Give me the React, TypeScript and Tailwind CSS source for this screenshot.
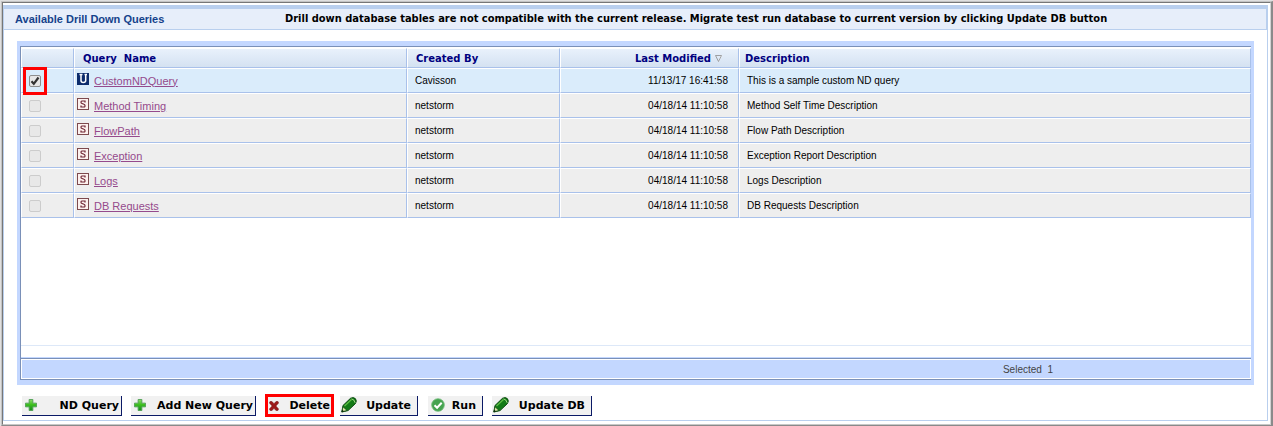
import React, { useState } from 'react'
import clsx from 'clsx'

interface Query {
  name: string
  kind: 'U' | 'S'
  createdBy: string
  modified: string
  description: string
}

const QUERIES: Query[] = [
  { name: 'CustomNDQuery', kind: 'U', createdBy: 'Cavisson', modified: '11/13/17 16:41:58', description: 'This is a sample custom ND query' },
  { name: 'Method Timing', kind: 'S', createdBy: 'netstorm', modified: '04/18/14 11:10:58', description: 'Method Self Time Description' },
  { name: 'FlowPath', kind: 'S', createdBy: 'netstorm', modified: '04/18/14 11:10:58', description: 'Flow Path Description' },
  { name: 'Exception', kind: 'S', createdBy: 'netstorm', modified: '04/18/14 11:10:58', description: 'Exception Report Description' },
  { name: 'Logs', kind: 'S', createdBy: 'netstorm', modified: '04/18/14 11:10:58', description: 'Logs Description' },
  { name: 'DB Requests', kind: 'S', createdBy: 'netstorm', modified: '04/18/14 11:10:58', description: 'DB Requests Description' }
]

const PlusIcon = () => (
  <svg width="12" height="12" viewBox="0 0 13 13" className="shrink-0" aria-hidden="true">
    <defs>
      <linearGradient id="plusFill" x1="0" y1="0" x2="0" y2="1">
        <stop offset="0" stopColor="#8fd86a" />
        <stop offset="0.45" stopColor="#3fc11f" />
        <stop offset="1" stopColor="#168a1c" />
      </linearGradient>
    </defs>
    <path d="M4.5 0.5h4v4h4v4h-4v4h-4v-4h-4v-4h4z" fill="url(#plusFill)" stroke="#4f9f55" strokeWidth="1" />
  </svg>
)

const CrossIcon = () => (
  <svg width="10" height="10" viewBox="0 0 10 10" className="shrink-0" aria-hidden="true">
    <path d="M1 0.5h2L5 2.7 7 0.5h2L9.6 2 6.9 5l2.7 3L8.8 9.6H7L5 7.3 3 9.6H1.2L0.4 8l2.7-3L0.4 2z" fill="#9c1b1b" stroke="#6f1010" strokeWidth="0.5" />
  </svg>
)

const PencilIcon = () => (
  <svg width="16" height="16" viewBox="0 0 16 16" className="shrink-0" aria-hidden="true">
    <path d="M2 8.500L9.500 1.300Q12.500 -0.300 14.500 1.800 16 4 14.500 6.500L7 13.600 0.800 15z" fill="#127a16" stroke="#0b4a10" strokeWidth="1" />
    <path d="M3.500 9L10.500 2.500" stroke="#5fbf45" strokeWidth="1.200" />
    <path d="M10.500 1.800Q13.500 2.500 14.200 5.800" fill="none" stroke="#a9dd8d" strokeWidth="1" />
    <path d="M2 9.800L6 13.400 1 14.800z" fill="#dfe7a8" stroke="#0b4a10" strokeWidth="0.700" />
    <path d="M0.500 15.300l0.800-2.600 1.800 1.900z" fill="#0b2a0c" />
  </svg>
)

const RunIcon = () => (
  <svg width="14" height="14" viewBox="0 0 14 14" className="shrink-0" aria-hidden="true">
    <circle cx="7" cy="7" r="6.300" fill="#45a350" stroke="#6fba77" strokeWidth="0.800" />
    <path d="M3.500 7.200l2.600 2.600 4.600-5" fill="none" stroke="#fff" strokeWidth="2" />
  </svg>
)

const KindIcon = ({ kind }: { kind: Query['kind'] }) => {
  const user = kind === 'U'
  return (
    <svg width="12" height="12" viewBox="0 0 12 12" className="mb-1 shrink-0" role="img" aria-label={user ? 'User query' : 'System query'}>
      <rect x="0.5" y="0.5" width="11" height="11" fill={user ? '#0d2c6c' : '#fdf1ee'} stroke={user ? '#0d2c6c' : '#7d4a4e'} />
      {user ? (
        <path d="M2.500 1.500h3M7.500 1.500h2.500M4 2v5.500q0 2 2.300 2T8.700 7.500V2" fill="none" stroke="#fff" strokeWidth="1.500" />
      ) : (
        <path d="M8 4.500V3H4.800Q4 3 4 4.200T5 5.500L7 6.200Q8 6.500 8 7.800T7.200 9H4V7.500" fill="none" stroke="#6d2230" strokeWidth="1.200" />
      )}
    </svg>
  )
}

const CELL = 'h-[25px] border-t border-l border-t-white border-l-white border-r border-b border-r-[#a9c1ea] border-b-[#a9c1ea] p-0 leading-4'
const HEAD = 'h-5 border-t border-l border-t-white border-l-white border-r border-b border-r-[#a9c1ea] border-b-[#a9c1ea] p-0 pt-px text-left font-bold leading-4'

interface ToolButtonProps {
  label: string
  icon: React.ReactNode
  className: string
}

const ToolButton = ({ label, icon, className }: ToolButtonProps) => (
  <button
    type="button"
    className={clsx(
      'flex items-center justify-between border-[#0b1a66] bg-[#f1f1f1] font-bold leading-4 whitespace-nowrap',
      className
    )}
  >
    {icon}
    <span className="pt-px">{label}</span>
  </button>
)

const App: React.FC = () => {
  const [selected, setSelected] = useState<string[]>(['CustomNDQuery'])

  const toggle = (name: string) => {
    setSelected((prev) => (prev.includes(name) ? prev.filter((n) => n !== name) : [...prev, name]))
  }

  return (
    <main className="border-t border-l border-[#e0e0e0] bg-white font-['DejaVu_Sans',Verdana,sans-serif] text-[11px] text-black">
      <div className="border-t border-r-2 border-b border-l border-t-[#c4c4c4] border-r-[#8a8a8a] border-b-[#8a8a8a] border-l-[#c4c4c4]">
        <div className="border-t border-r border-b border-l border-t-[#777] border-r-[#d4d4d4] border-b-[#c8c8c8] border-l-[#777] pt-[2px] pr-[2px] pb-[3px]">
          <section className="border border-[#b9cfee] pb-[3px]">
            <header className="flex h-6 items-center border-t-[3px] border-r border-b border-[#b9cfee] bg-[#e7eefa] pt-px pl-[11px]">
              <h1 className="w-[270px] shrink-0 font-['Liberation_Sans',Arial,sans-serif] text-[11px] font-bold text-[#15428b]">Available Drill Down Queries</h1>
              <p className="font-['DejaVu_Sans_Condensed','DejaVu_Sans',sans-serif] font-bold whitespace-nowrap">
                Drill down database tables are not compatible with the current release. Migrate test run database to current version by clicking Update DB button
              </p>
            </header>

            <div className="mt-[11px] mr-[13px] ml-[13px] bg-[#c3d7ff] pt-[5px] pr-[3px] pb-[5px] pl-[3px]">
              <div className="border-t border-l border-[#7a90b8]">
                <div className="min-h-[299px] border-b border-[#dde8f8] bg-white">
                  <table className="w-full table-fixed border-separate border-spacing-0 border-t border-white">
                    <colgroup>
                      <col className="w-[53px]" />
                      <col className="w-[333px]" />
                      <col className="w-[153px]" />
                      <col className="w-[179px]" />
                      <col />
                    </colgroup>
                    <thead className="bg-linear-to-b from-[#eaf2fc] to-[#d3e1f1] text-[10px] text-[#00007f]">
                      <tr>
                        <th className={HEAD} aria-label="Select" />
                        <th className={clsx(HEAD, 'pl-2 whitespace-pre')}>{'Query  Name'}</th>
                        <th className={clsx(HEAD, 'pl-2')}>Created By</th>
                        <th className={HEAD}>
                          <div className="flex items-center justify-end gap-1 pr-4">
                            Last Modified
                            <svg width="7" height="7" viewBox="0 0 7 7" aria-hidden="true">
                              <path d="M6.500 0.500L3.500 6.500" stroke="#fff" />
                              <path d="M6.500 0.500h-6l3 6z" fill="none" stroke="#8c8c8c" strokeWidth="0.800" />
                            </svg>
                          </div>
                        </th>
                        <th className={clsx(HEAD, 'pl-[5px]')}>Description</th>
                      </tr>
                    </thead>
                    <tbody className="font-['Liberation_Sans',Arial,sans-serif] text-[10px]">
                      {QUERIES.map((q) => {
                        const checked = selected.includes(q.name)
                        return (
                          <tr key={q.name} className={checked ? 'bg-[#daecfb]' : 'bg-[#eeeeee]'}>
                            <td className={CELL}>
                              <label className={clsx('relative ml-px -my-[3px] flex h-7 w-6 items-center justify-center border-[3px]', checked ? 'border-[#f00]' : 'border-transparent')}>
                                <input
                                  type="checkbox"
                                  aria-label={q.name}
                                  checked={checked}
                                  disabled={q.kind === 'S'}
                                  onChange={() => toggle(q.name)}
                                  className="size-3 appearance-none rounded-xs border border-[#8e8e8e] bg-[#e6e6e6] disabled:border-[#cccccc] disabled:bg-[#e8e8e8]"
                                />
                                {checked && (
                                  <svg width="10" height="10" viewBox="0 0 10 10" className="pointer-events-none absolute" aria-hidden="true">
                                    <path d="M1.500 5.200l2.300 2.600L8.500 1.500" fill="none" stroke="#333" strokeWidth="2.200" />
                                  </svg>
                                )}
                              </label>
                            </td>
                            <td className={CELL}>
                              <div className="flex items-center gap-[5px] pl-[2px] text-[11px]">
                                <KindIcon kind={q.kind} />
                                <a href="#" className="text-[#954a8c] underline">{q.name}</a>
                              </div>
                            </td>
                            <td className={clsx(CELL, 'pl-[7px]')}>{q.createdBy}</td>
                            <td className={clsx(CELL, 'pr-[10px] text-right')}>{q.modified}</td>
                            <td className={clsx(CELL, 'pl-[7px]')}>{q.description}</td>
                          </tr>
                        )
                      })}
                    </tbody>
                  </table>
                </div>
                <div className="h-3 border-b border-[#c3d7ff] bg-white" />
                <div className="border-t border-b border-[#7a90b8]">
                  <div className="flex h-5 items-center justify-end border border-white pr-[197px] font-['Liberation_Sans',Arial,sans-serif] text-[10px] text-[#444]">
                    <span className="whitespace-pre">{`Selected  ${selected.length}`}</span>
                  </div>
                </div>
              </div>
            </div>

            <div className="mt-[9px] ml-[18px] flex items-center">
              <ToolButton label="ND Query" icon={<PlusIcon />} className="h-5 w-[100px] border-r border-b pr-[2px] pl-[3px]" />
              <ToolButton label="Add New Query" icon={<PlusIcon />} className="ml-[9px] h-5 w-[125px] border-r border-b pr-[2px] pl-[3px]" />
              <div className="ml-[9px] border-[3px] border-[#f00]">
                <ToolButton label="Delete" icon={<CrossIcon />} className="h-[17px] w-[63px] pr-px pl-px" />
              </div>
              <ToolButton label="Update" icon={<PencilIcon />} className="ml-[6px] h-5 w-[78px] border-r border-b pr-[6px] pl-px" />
              <ToolButton label="Run" icon={<RunIcon />} className="ml-[10px] h-5 w-[55px] border-r border-b pr-[6px] pl-[3px]" />
              <ToolButton label="Update DB" icon={<PencilIcon />} className="ml-[9px] h-5 w-[100px] border-r border-b pr-[6px] pl-px" />
            </div>
          </section>
        </div>
      </div>
    </main>
  )
}

export default App
